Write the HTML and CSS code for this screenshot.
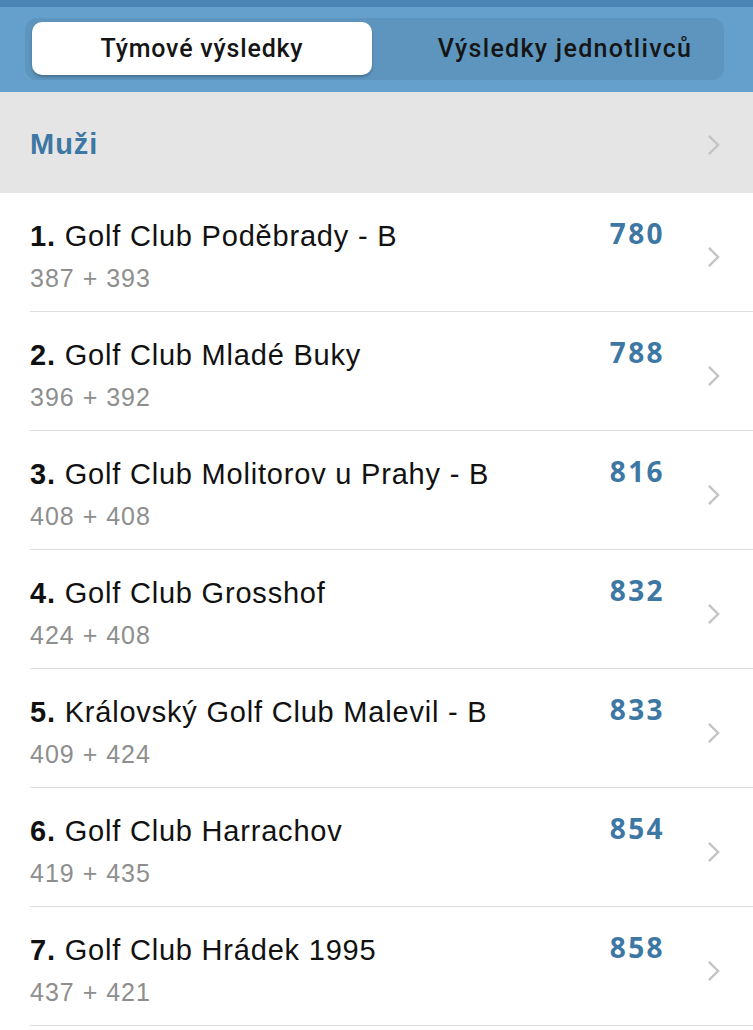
FILE: index.html
```html
<!DOCTYPE html>
<html lang="cs">
<head>
    <meta charset="UTF-8">
    <title>Výsledky</title>
    <link rel="stylesheet" href="styles.css">
</head>
<body>
    <header class="topbar">
        <div class="segments">
            <div class="segment active">Týmové výsledky</div>
            <div class="segment second">Výsledky jednotlivců</div>
        </div>
    </header>

    <div class="section-head">
        <span>Muži</span>
        <svg class="chevron" viewBox="0 0 14 24"><path d="M2 2 L12 12 L2 22"/></svg>
    </div>

    <ul class="results">
        <li class="row">
            <div class="info">
                <div class="team"><b>1.</b> Golf Club Poděbrady - B</div>
                <div class="rounds">387 + 393</div>
            </div>
            <div class="total">780</div>
            <svg class="chevron" viewBox="0 0 14 24"><path d="M2 2 L12 12 L2 22"/></svg>
        </li>
        <li class="row">
            <div class="info">
                <div class="team"><b>2.</b> Golf Club Mladé Buky</div>
                <div class="rounds">396 + 392</div>
            </div>
            <div class="total">788</div>
            <svg class="chevron" viewBox="0 0 14 24"><path d="M2 2 L12 12 L2 22"/></svg>
        </li>
        <li class="row">
            <div class="info">
                <div class="team"><b>3.</b> Golf Club Molitorov u Prahy - B</div>
                <div class="rounds">408 + 408</div>
            </div>
            <div class="total">816</div>
            <svg class="chevron" viewBox="0 0 14 24"><path d="M2 2 L12 12 L2 22"/></svg>
        </li>
        <li class="row">
            <div class="info">
                <div class="team"><b>4.</b> Golf Club Grosshof</div>
                <div class="rounds">424 + 408</div>
            </div>
            <div class="total">832</div>
            <svg class="chevron" viewBox="0 0 14 24"><path d="M2 2 L12 12 L2 22"/></svg>
        </li>
        <li class="row">
            <div class="info">
                <div class="team"><b>5.</b> Královský Golf Club Malevil - B</div>
                <div class="rounds">409 + 424</div>
            </div>
            <div class="total">833</div>
            <svg class="chevron" viewBox="0 0 14 24"><path d="M2 2 L12 12 L2 22"/></svg>
        </li>
        <li class="row">
            <div class="info">
                <div class="team"><b>6.</b> Golf Club Harrachov</div>
                <div class="rounds">419 + 435</div>
            </div>
            <div class="total">854</div>
            <svg class="chevron" viewBox="0 0 14 24"><path d="M2 2 L12 12 L2 22"/></svg>
        </li>
        <li class="row">
            <div class="info">
                <div class="team"><b>7.</b> Golf Club Hrádek 1995</div>
                <div class="rounds">437 + 421</div>
            </div>
            <div class="total">858</div>
            <svg class="chevron" viewBox="0 0 14 24"><path d="M2 2 L12 12 L2 22"/></svg>
        </li>
    </ul>
</body>
</html>
```

FILE: styles.css
```css
:root {
    --bar: #64a0cb;
    --bar-dark: #4a85b6;
    --accent: #3d77a3;
    --muted: #8e8e8e;
    --line: #dedede;
}

body {
    margin: 0;
    font-family: 'Liberation Sans', Arial, sans-serif;
    background: white;
    color: #111;
    overflow: hidden;
}

.topbar {
    background: var(--bar);
    border-top: 7px solid var(--bar-dark);
    padding: 11px 29px 12px 25px;
    height: 62px;
}

.segments {
    display: grid;
    grid-template-columns: 340px 1fr;
    height: 62px;
    background: #5d95bf;
    border-radius: 12px;
    padding: 4px 0 5px 7px;
    box-sizing: border-box;
}

.segment {
    display: flex;
    align-items: center;
    justify-content: center;
    font-family: Roboto, sans-serif;
    font-size: 25px;
    font-weight: 500;
    letter-spacing: 0.8px;
    color: #151515;
}

.segment.second {
    padding-left: 34px;
    letter-spacing: 1.3px;
}

.segment.active {
    background: white;
    border-radius: 10px;
    box-shadow: 0 2px 3px rgba(0,0,0,0.25);
}

.section-head {
    display: flex;
    align-items: center;
    justify-content: space-between;
    height: 101px;
    padding: 4px 33px 0 30px;
    box-sizing: border-box;
    background: #e5e5e5;
    font-size: 29px;
    font-weight: 700;
    letter-spacing: 1px;
    color: var(--accent);
}

.chevron {
    width: 13px;
    height: 22px;
    flex: none;
}

.chevron path {
    fill: none;
    stroke: #c4c4c8;
    stroke-width: 2.6;
}

.results {
    list-style: none;
    margin: 0;
    padding: 0 0 0 30px;
}

.row {
    display: flex;
    align-items: flex-start;
    height: 119px;
    box-sizing: border-box;
    padding: 26px 33px 0 0;
    border-bottom: 1px solid var(--line);
}

.row .chevron {
    margin-top: 27px;
}

.info {
    flex: 1;
}

.team {
    font-size: 29px;
    line-height: 34px;
    letter-spacing: 0.8px;
}

.rounds {
    font-size: 25px;
    line-height: 30px;
    letter-spacing: 1px;
    margin-top: 10px;
    color: var(--muted);
}

.total {
    margin: -1px 42px 0 0;
    font-family: 'Open Sans', sans-serif;
    font-size: 28px;
    line-height: 30px;
    font-weight: 700;
    letter-spacing: 2.4px;
    color: var(--accent);
}
```
